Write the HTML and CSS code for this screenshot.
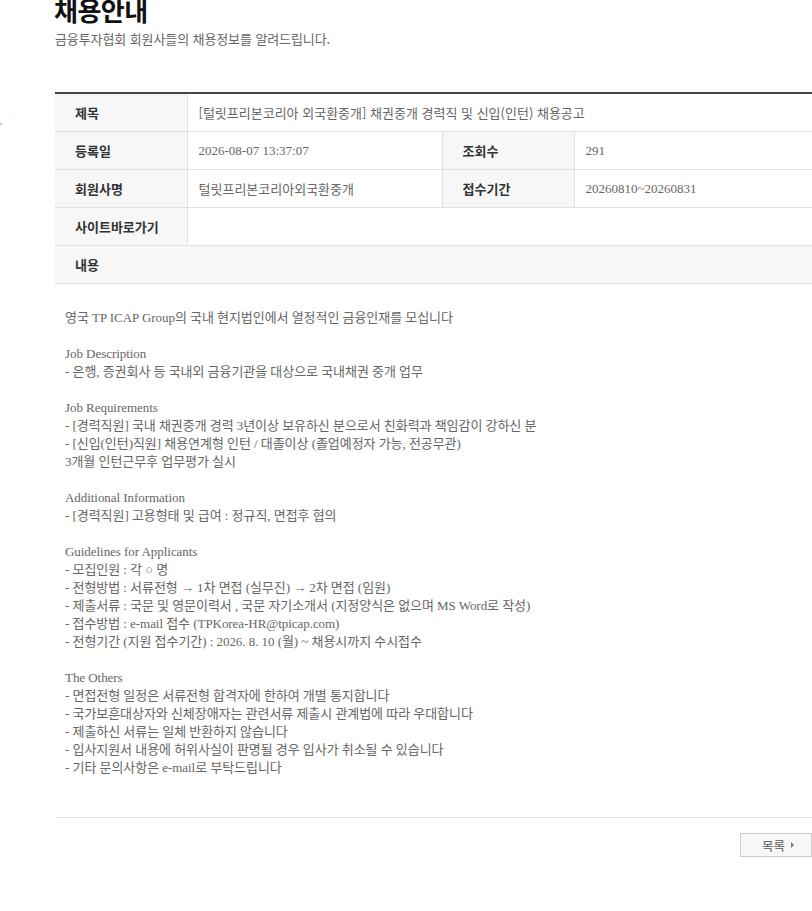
FILE: index.html
```html
<!DOCTYPE html>
<html lang="ko">
<head>
<meta charset="utf-8">
<title>채용안내</title>
<link rel="stylesheet" href="styles.css">
</head>
<body>
<span class="dot"></span>
<div class="wrap">
  <div class="page-head">
    <h2 class="page-title">채용안내</h2>
    <p class="page-desc">금융투자협회 회원사들의 채용정보를 알려드립니다.</p>
  </div>

  <table class="view">
    <colgroup>
      <col class="c-th"><col class="c-td1"><col class="c-th"><col class="c-td2">
    </colgroup>
    <tbody>
      <tr>
        <th>제목</th>
        <td colspan="3">[털릿프리본코리아 외국환중개] 채권중개 경력직 및 신입(인턴) 채용공고</td>
      </tr>
      <tr>
        <th>등록일</th>
        <td class="serif">2026-08-07 13:37:07</td>
        <th class="th2">조회수</th>
        <td class="serif">291</td>
      </tr>
      <tr>
        <th>회원사명</th>
        <td>털릿프리본코리아외국환중개</td>
        <th class="th2">접수기간</th>
        <td class="serif">20260810~20260831</td>
      </tr>
      <tr>
        <th>사이트바로가기</th>
        <td colspan="3"></td>
      </tr>
      <tr class="row-full">
        <th colspan="4">내용</th>
      </tr>
    </tbody>
  </table>

  <div class="content">
    <p>영국 TP ICAP Group의 국내 현지법인에서 열정적인 금융인재를 모십니다</p>
    <p class="blank">&nbsp;</p>
    <p>Job Description</p>
    <p>- 은행, 증권회사 등 국내외 금융기관을 대상으로 국내채권 중개 업무</p>
    <p class="blank">&nbsp;</p>
    <p>Job Requirements</p>
    <p>- [경력직원] 국내 채권중개 경력 3년이상 보유하신 분으로서 친화력과 책임감이 강하신 분</p>
    <p>- [신입(인턴)직원] 채용연계형 인턴 / 대졸이상 (졸업예정자 가능, 전공무관)</p>
    <p>3개월 인턴근무후 업무평가 실시</p>
    <p class="blank">&nbsp;</p>
    <p>Additional Information</p>
    <p>- [경력직원] 고용형태 및 급여 : 정규직, 면접후 협의</p>
    <p class="blank">&nbsp;</p>
    <p>Guidelines for Applicants</p>
    <p>- 모집인원 : 각 ○ 명</p>
    <p>- 전형방법 : 서류전형 → 1차 면접 (실무진) → 2차 면접 (임원)</p>
    <p>- 제출서류 : 국문 및 영문이력서 , 국문 자기소개서 (지정양식은 없으며 MS Word로 작성)</p>
    <p>- 접수방법 : e-mail 접수 (TPKorea-HR@tpicap.com)</p>
    <p>- 전형기간 (지원 접수기간) : 2026. 8. 10 (월) ~ 채용시까지 수시접수</p>
    <p class="blank">&nbsp;</p>
    <p>The Others</p>
    <p>- 면접전형 일정은 서류전형 합격자에 한하여 개별 통지합니다</p>
    <p>- 국가보훈대상자와 신체장애자는 관련서류 제출시 관계법에 따라 우대합니다</p>
    <p>- 제출하신 서류는 일체 반환하지 않습니다</p>
    <p>- 입사지원서 내용에 허위사실이 판명될 경우 입사가 취소될 수 있습니다</p>
    <p>- 기타 문의사항은 e-mail로 부탁드립니다</p>
  </div>

  <div class="btn-area">
    <a class="btn-list" href="#">목록<span class="arrow"></span></a>
  </div>
</div>
</body>
</html>
```

FILE: styles.css
```css
html, body {
  margin: 0;
  padding: 0;
  background: #fff;
}
body {
  font-family: "Noto Sans CJK KR", "Noto Sans", sans-serif;
  color: #333;
  overflow: hidden;
  position: relative;
}
.dot {
  position: absolute;
  left: 0;
  top: 123px;
  width: 2px;
  height: 2px;
  background: #f7a27a;
  border-radius: 1px;
}
.wrap {
  margin-left: 55px;
  width: 757px;
}
.page-head {
  display: flow-root;
  height: 92px;
}
.page-title {
  margin: -9px 0 0 -1px;
  font-size: 26px;
  line-height: 38px;
  font-weight: 700;
  color: #111;
  letter-spacing: -0.5px;
}
.page-desc {
  margin: 0;
  font-size: 13px;
  line-height: 20px;
  color: #666;
  letter-spacing: -0.1px;
}
.view {
  width: 100%;
  border-collapse: collapse;
  table-layout: fixed;
  border-top: 2px solid #444;
}
.c-th { width: 132px; }
.c-td1 { width: 255px; }
.c-td2 { width: auto; }
.view th,
.view td {
  height: 37px;
  padding: 0;
  border-bottom: 1px solid #e1e1e1;
  font-size: 13px;
  line-height: 18px;
  vertical-align: middle;
  text-align: left;
}
.view th {
  background: #f7f7f7;
  color: #333;
  font-weight: 700;
  padding-left: 20px;
  border-right: 1px solid #e1e1e1;
}
.view th.th2 {
  border-left: 1px solid #e1e1e1;
}
.view td {
  color: #666;
  padding-left: 11px;
  font-size: 13px;
  letter-spacing: 0;
}
.view td.serif {
  font-family: "Liberation Serif", "Noto Sans CJK KR", serif;
  font-size: 13px;
  letter-spacing: 0;
}
.view .row-full th {
  border-right: none;
}
.content {
  padding: 25px 10px 40px;
  border-bottom: 1px solid #e1e1e1;
  font-family: "Liberation Serif", "Noto Sans CJK KR", serif;
  font-size: 13px;
  line-height: 18px;
  color: #666;
  height: 468px;
  box-sizing: content-box;
}
.content p {
  margin: 0;
  white-space: nowrap;
  letter-spacing: -0.05px;
}
.btn-area {
  display: flex;
  justify-content: flex-end;
  padding-top: 15px;
}
.btn-list {
  display: flex;
  align-items: center;
  justify-content: center;
  gap: 6px;
  box-sizing: border-box;
  width: 72px;
  height: 24px;
  border: 1px solid #ccc;
  background: #f7f7f7;
  color: #555;
  font-size: 12.5px;
  text-decoration: none;
  padding-left: 4px;
}
.arrow {
  width: 0;
  height: 0;
  border-left: 3px solid #777;
  border-top: 3px solid transparent;
  border-bottom: 3px solid transparent;
}
```
